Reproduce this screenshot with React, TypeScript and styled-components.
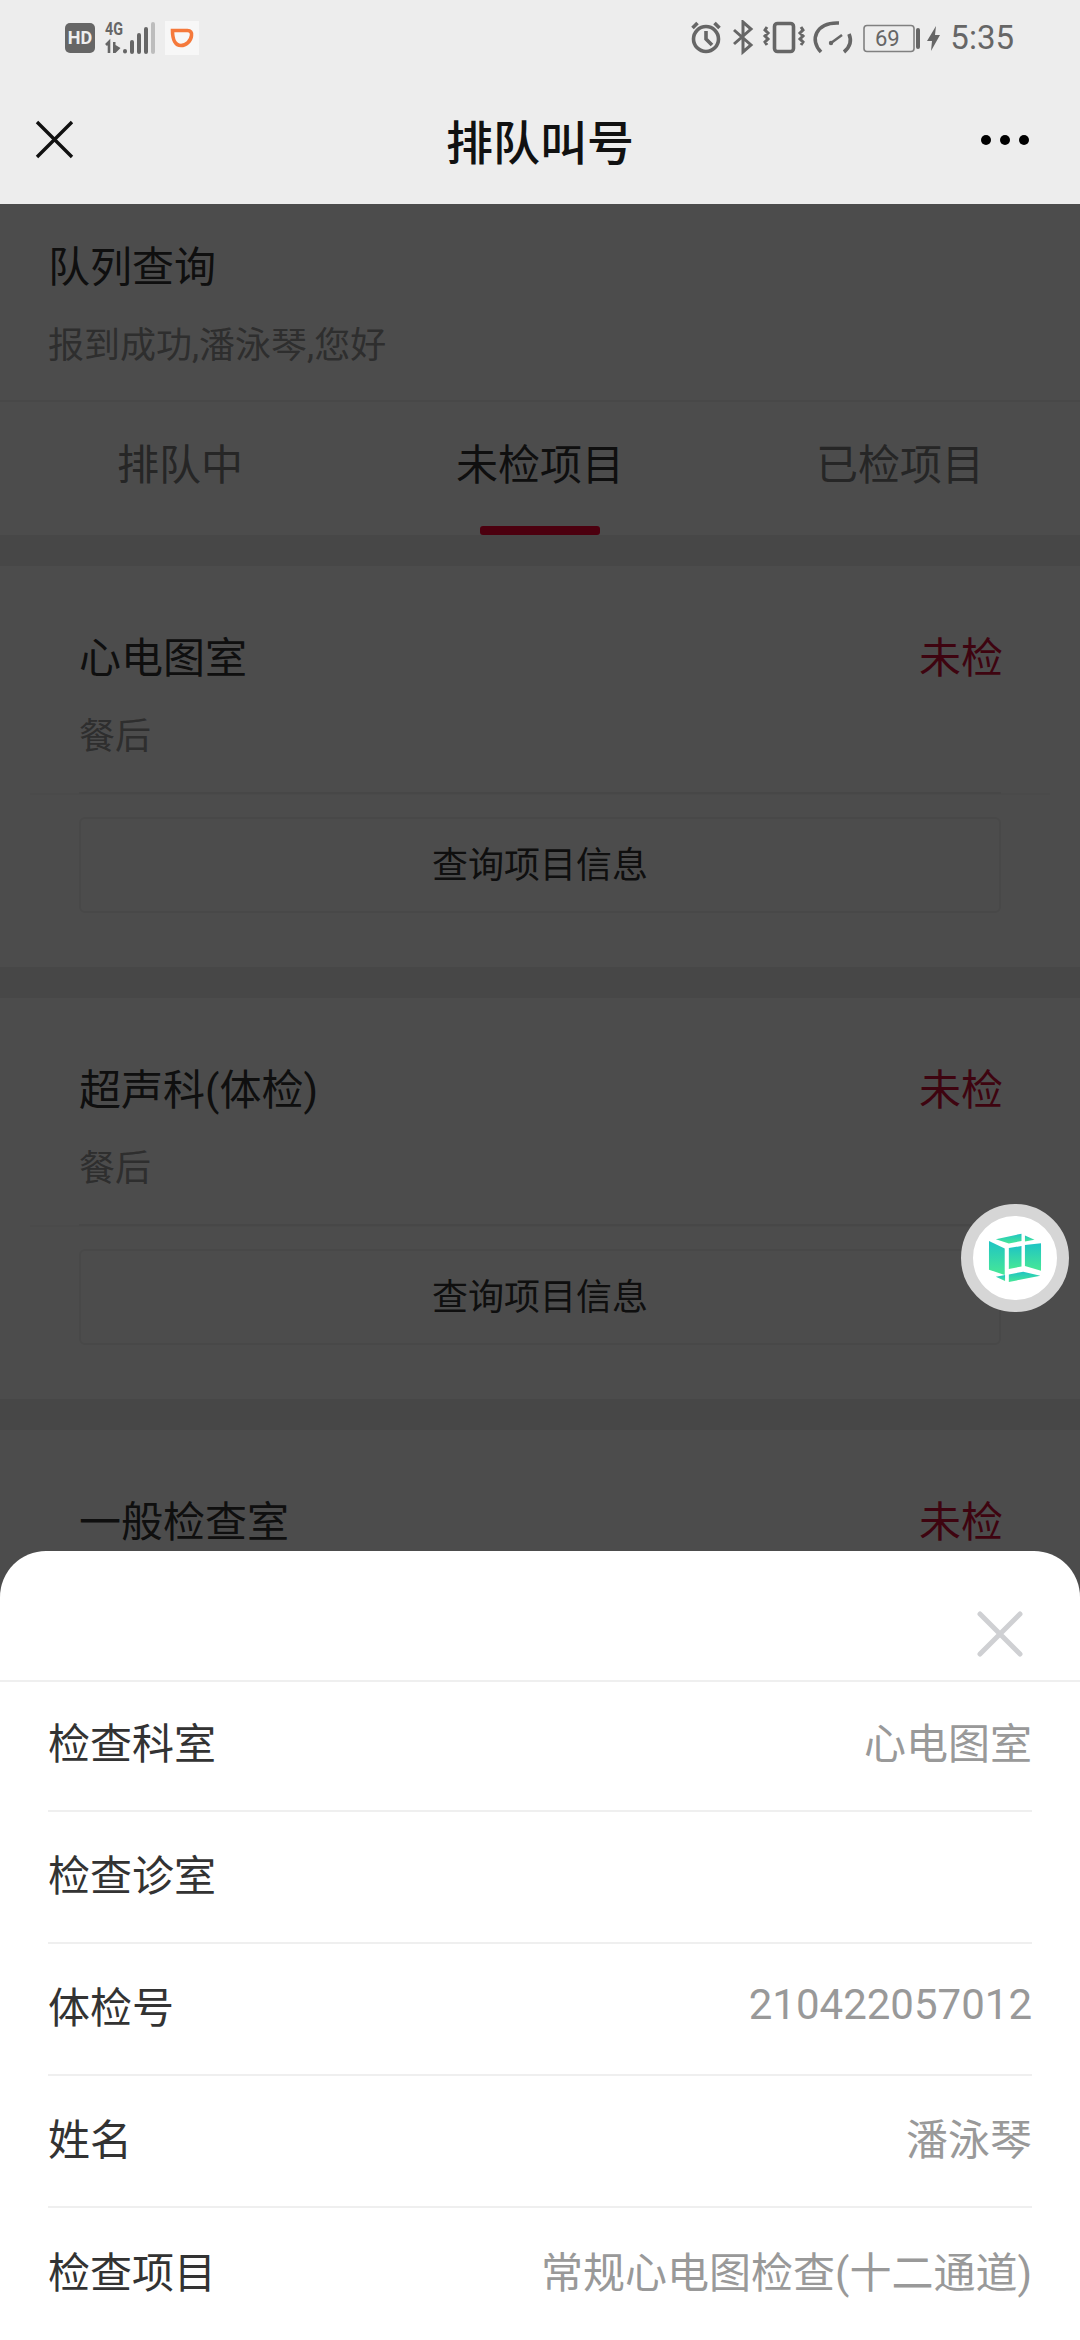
import React from "react";
import styled, { createGlobalStyle } from "styled-components";

const Global = createGlobalStyle`
  html, body { margin: 0; padding: 0; background: #fff; }
  * { box-sizing: border-box; }
  body { font-family: Roboto, "Noto Sans CJK SC", sans-serif; }
`;

const Screen = styled.div`
  position: relative;
  width: 1080px;
  height: 2340px;
  overflow: hidden;
  background: #ededed;
`;
const Top = styled.header`
  height: 204px;
  background: #ededed;
`;
const StatusBar = styled.div`
  height: 76px;
  display: flex;
  align-items: center;
  justify-content: space-between;
  padding: 0 66px 0 65px;
`;
const StatusGroup = styled.div`
  display: flex;
  align-items: center;
`;
const Time = styled.span`
  font-size: 33px;
  color: #666;
  margin-left: 9px;
  line-height: 40px;
`;
const NavBar = styled.div`
  height: 128px;
  display: grid;
  grid-template-columns: 1fr auto 1fr;
  align-items: center;
  padding: 0 49px 0 35px;
`;
const NavSide = styled.div<{ $end?: boolean }>`
  display: flex;
  justify-content: ${(p) => (p.$end ? "flex-end" : "flex-start")};
`;
const NavTitle = styled.div`
  font-size: 47px;
  font-weight: 500;
  color: #111;
  margin: 0 0 2px 14px;
`;
const Page = styled.main`
  background: #ededed;
`;
const Intro = styled.section`
  height: 198px;
  background: #fff;
  padding: 31px 48px 0;
  border-bottom: 2px solid #f2f2f2;
`;
const IntroTitle = styled.div`
  font-size: 42px;
  line-height: 66px;
  color: #333;
`;
const IntroSub = styled.div`
  font-size: 36px;
  line-height: 50px;
  margin-top: 20px;
  color: #999;
`;
const Tabs = styled.nav`
  height: 133px;
  background: #fff;
  display: grid;
  grid-template-columns: repeat(3, 1fr);
`;
const Tab = styled.div<{ $active?: boolean }>`
  position: relative;
  display: flex;
  justify-content: center;
  padding-top: 33px;
  font-size: 42px;
  line-height: 62px;
  color: ${(p) => (p.$active ? "#333" : "#808080")};
  ${(p) =>
    p.$active &&
    `&::after {
      content: "";
      position: absolute;
      left: 120px;
      bottom: 0;
      width: 120px;
      height: 9px;
      border-radius: 3px;
      background: #ff0035;
    }`}
`;
const Card = styled.article`
  height: 401px;
  margin-top: 31px;
  background: #fff;
  padding-top: 62px;
`;
const CardHead = styled.div`
  display: flex;
  justify-content: space-between;
  padding: 0 77px 0 79px;
  height: 62px;
  line-height: 62px;
  font-size: 42px;
  color: #333;
`;
const Status = styled.span`
  color: #d00f38;
`;
const CardSub = styled.div`
  margin-top: 24px;
  padding: 0 79px;
  height: 46px;
  line-height: 46px;
  font-size: 36px;
  color: #999;
`;
const CardLine = styled.div`
  position: relative;
  height: 2px;
  margin: 33px 30px 0;
  background: #f8f8f8;
  &::after {
    content: "";
    position: absolute;
    left: 49px;
    right: 49px;
    top: -1px;
    height: 2px;
    background: #eeeeee;
  }
`;
const QueryButton = styled.div`
  margin: 22px 79px 0;
  height: 96px;
  padding-bottom: 6px;
  border: 2px solid #f0f0f0;
  border-radius: 6px;
  display: flex;
  align-items: center;
  justify-content: center;
  font-size: 36px;
  color: #333;
`;
const Overlay = styled.div`
  position: absolute;
  left: 0;
  right: 0;
  top: 204px;
  bottom: 0;
  background: rgba(0, 0, 0, 0.7);
`;
const Floater = styled.div`
  position: absolute;
  left: 961px;
  top: 1204px;
  width: 108px;
  height: 108px;
  border-radius: 50%;
  border: 12px solid #d6d6d6;
  background: #fff;
  display: flex;
  align-items: center;
  justify-content: center;
`;
const Sheet = styled.section`
  position: absolute;
  left: 0;
  right: 0;
  top: 1551px;
  bottom: 0;
  background: #fff;
  border-radius: 46px 46px 0 0;
`;
const SheetHead = styled.div`
  height: 131px;
  display: flex;
  align-items: flex-start;
  justify-content: flex-end;
  padding: 60px 57px 0 0;
  border-bottom: 2px solid #efefef;
`;
const Row = styled.div`
  margin: 0 48px;
  height: 132px;
  padding-bottom: 9px;
  display: flex;
  align-items: center;
  justify-content: space-between;
  font-size: 42px;
  color: #333;
  border-bottom: 2px solid #efefef;
  &:nth-child(2) { height: 130px; padding-bottom: 11px; }
  &:last-child { border-bottom: 0; }
`;
const RowValue = styled.span`
  color: #999;
`;

const BarsSvg = styled.svg`
  margin-bottom: 8px;
`;
const Bars = () => (
  <BarsSvg width="61" height="42" viewBox="0 -8 61 42">
    <text x="1" y="14" fontFamily="Roboto" fontWeight="700" fontSize="18" fill="#666" textLength="18" lengthAdjust="spacingAndGlyphs">4G</text>
    <path d="M5 32V21l-3 3" fill="none" stroke="#666" strokeWidth="2.6" />
    <path d="M9 21v11h2.500l5-5-5-3v-3z" fill="#666" />
    <g stroke="#666" strokeWidth="4" strokeLinecap="round">
      <path d="M21 30v.5M28 21v10M35 14v17M42 8v23" />
      <path d="M49 3v28" stroke="#bdbdbd" />
    </g>
  </BarsSvg>
);

const HdBadge = styled.div`
  width: 30px;
  height: 30px;
  border-radius: 5px;
  background: #666;
  color: #eee;
  font-size: 18px;
  font-weight: 700;
  line-height: 30px;
  text-align: center;
  margin-right: 9px;
`;
const DidiBox = styled.div`
  width: 34px;
  height: 34px;
  background: #f7f7f7;
  display: flex;
  align-items: center;
  justify-content: center;
`;

const RightIcons = () => (
  <svg width="250" height="36" viewBox="693 20 250 36">
    <g fill="none" stroke="#666" strokeWidth="3.6">
      <circle cx="708" cy="39" r="12.5" />
      <path d="M708 31v8l6 6M694.500 28l5-5M721.500 28l-5-5" />
      <path d="M736 30l17 15-8 7V22l8 7-17 15" strokeWidth="3" />
      <rect x="776.500" y="23.500" width="19" height="28" rx="3" />
      <path d="M769 27l-2 3 3 3-3 3 3 3-3 3 2 3M803 27l2 3-3 3 3 3-3 3 3 3-2 3" strokeWidth="3" />
      <path d="M823 52C811 40 818 22 841 23M851 34c3 7 1 13-5 18" strokeWidth="3.6" />
      <path d="M833 43l11-8" strokeWidth="2.6" />
      <circle cx="833" cy="43" r="2.200" fill="#666" stroke="none" />
      <rect x="866" y="25.500" width="50" height="26" rx="3" stroke="#808080" strokeWidth="1.6" />
      <path d="M920 30v17" strokeWidth="4" strokeLinecap="round" />
    </g>
    <text x="877" y="46" fontFamily="Roboto" fontSize="22" fill="#666">69</text>
    <path d="M938 26l-9 15h5l-1 10 9-16h-5z" fill="#666" />
  </svg>
);

const NavClose = () => (
  <svg width="40" height="40" viewBox="0 0 40 40">
    <path d="M2 2l35 35M37 2L2 37" stroke="#111" strokeWidth="3.4" />
  </svg>
);
const NavMore = () => (
  <svg width="50" height="12" viewBox="0 0 50 12">
    <circle cx="5" cy="6" r="5" fill="#000" />
    <circle cx="24" cy="6" r="5" fill="#000" />
    <circle cx="43" cy="6" r="5" fill="#000" />
  </svg>
);
const SheetClose = () => (
  <svg width="46" height="46" viewBox="0 0 46 46">
    <path d="M3 3l40 40M43 3L3 43" stroke="#cfd0d3" strokeWidth="5" strokeLinecap="round" />
  </svg>
);
const Cube = () => (
  <svg width="54" height="50" viewBox="148 160 156 146">
    <defs>
      <linearGradient id="cubeFill" x1="0" y1="0" x2="0" y2="1">
        <stop offset="0" stopColor="#1fc4c4" />
        <stop offset="1" stopColor="#47e896" />
      </linearGradient>
    </defs>
    <g fill="url(#cubeFill)">
      <path d="M150 183l46 22v78l-46-16z" />
      <path d="M170 178l75-16v21l-37 8z" />
      <path d="M255 167l28 13-28 5z" />
      <path d="M255 195l47-5v80l-47-14z" />
      <path d="M208 204l37-6v60l-37 7z" />
      <path d="M170 288l27-5v17z" />
      <path d="M208 303l92-18-50-12-42 8z" />
    </g>
  </svg>
);

const cards = ["心电图室", "超声科(体检)", "一般检查室"];
const rows: [string, string][] = [
  ["检查科室", "心电图室"],
  ["检查诊室", ""],
  ["体检号", "210422057012"],
  ["姓名", "潘泳琴"],
  ["检查项目", "常规心电图检查(十二通道)"],
];

export default function App() {
  return (
    <Screen>
      <Global />
      <Top>
        <StatusBar>
          <StatusGroup>
            <HdBadge>HD</HdBadge>
            <Bars />
            <DidiBox>
              <svg width="24" height="20" viewBox="0 0 24 20">
                <path d="M2.500 2.500h15c3 0 4.500 2 4 5C21 13 16 17.500 11 17.500 5.500 17.500 2.500 12 2.500 2.500z" fill="none" stroke="#f5793b" strokeWidth="3.6" />
              </svg>
            </DidiBox>
          </StatusGroup>
          <StatusGroup>
            <RightIcons />
            <Time>5:35</Time>
          </StatusGroup>
        </StatusBar>
        <NavBar>
          <NavSide>
            <NavClose />
          </NavSide>
          <NavTitle>排队叫号</NavTitle>
          <NavSide $end>
            <NavMore />
          </NavSide>
        </NavBar>
      </Top>
      <Page>
        <Intro>
          <IntroTitle>队列查询</IntroTitle>
          <IntroSub>报到成功,潘泳琴,您好</IntroSub>
        </Intro>
        <Tabs>
          <Tab>排队中</Tab>
          <Tab $active>未检项目</Tab>
          <Tab>已检项目</Tab>
        </Tabs>
        {cards.map((name) => (
          <Card key={name}>
            <CardHead>
              <span>{name}</span>
              <Status>未检</Status>
            </CardHead>
            <CardSub>餐后</CardSub>
            <CardLine />
            <QueryButton>查询项目信息</QueryButton>
          </Card>
        ))}
      </Page>
      <Overlay />
      <Floater>
        <Cube />
      </Floater>
      <Sheet>
        <SheetHead>
          <SheetClose />
        </SheetHead>
        {rows.map(([k, v]) => (
          <Row key={k}>
            <span>{k}</span>
            <RowValue>{v}</RowValue>
          </Row>
        ))}
      </Sheet>
    </Screen>
  );
}
